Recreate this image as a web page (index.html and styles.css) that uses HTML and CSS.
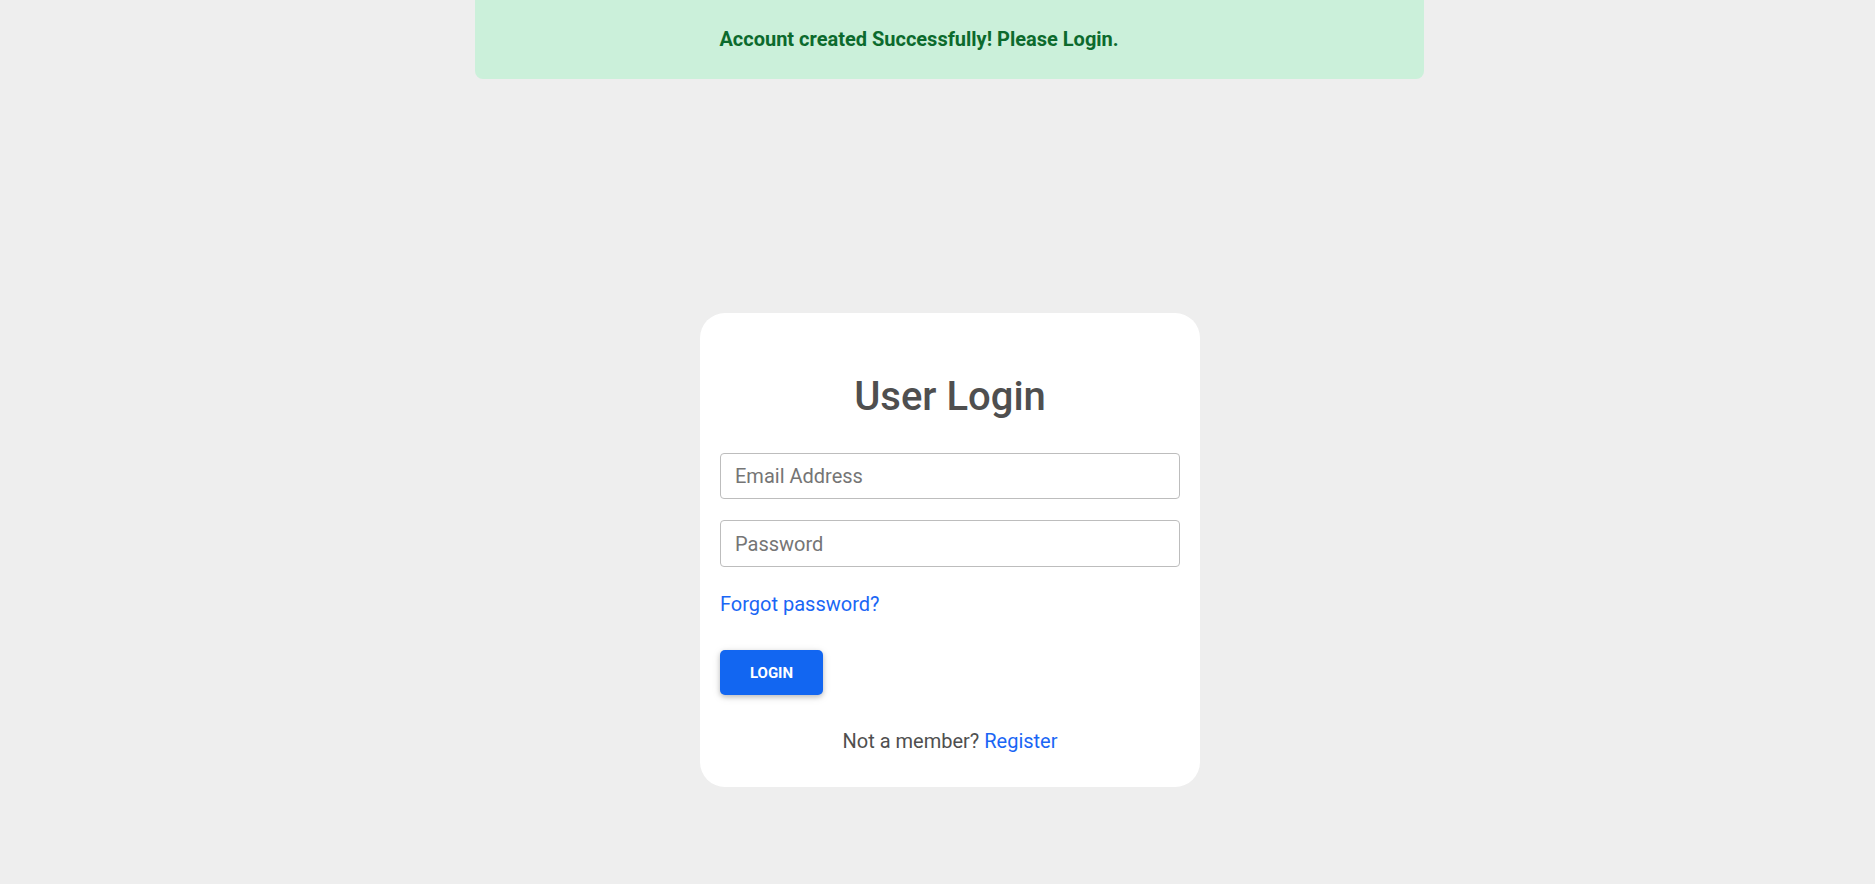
FILE: index.html
```html
<!DOCTYPE html>
<html lang="en">
<head>
<meta charset="utf-8">
<title>User Login</title>
<link rel="stylesheet" href="styles.css">
</head>
<body>
<div class="page">
  <div class="alert">Account created Successfully! Please Login.</div>
  <form class="card">
    <h1 class="title">User Login</h1>
    <input class="field" type="email" placeholder="Email Address">
    <input class="field field-gap" type="password" placeholder="Password">
    <a class="link forgot" href="#">Forgot password?</a>
    <button class="btn" type="button">Login</button>
    <p class="footer">Not a member? <a class="link" href="#">Register</a></p>
  </form>
</div>
</body>
</html>
```

FILE: styles.css
```css
html, body {
  margin: 0;
  padding: 0;
  background: #eeeeee;
  font-family: Roboto, "Liberation Sans", sans-serif;
  color: #4f4f4f;
}
.page {
  margin-left: 25px;
  display: flex;
  flex-direction: column;
  align-items: center;
  min-height: 884px;
}
.alert {
  box-sizing: border-box;
  width: 949px;
  height: 79px;
  margin-right: 1px;
  background: #cbf0da;
  color: #0c6a2d;
  font-size: 20px;
  font-weight: 700;
  display: flex;
  align-items: center;
  justify-content: center;
  padding-right: 61px;
  padding-bottom: 2px;
  border-radius: 0 0 8px 8px;
}
.card {
  box-sizing: border-box;
  margin-top: 234px;
  width: 500px;
  background: #ffffff;
  border-radius: 25px;
  padding: 60px 20px 31px;
  display: flex;
  flex-direction: column;
}
.title {
  margin: 0 0 32px;
  font-size: 40px;
  line-height: 48px;
  font-weight: 500;
  text-align: center;
  color: #4f4f4f;
}
.field {
  box-sizing: border-box;
  height: 46px;
  width: 100%;
  border: 1px solid #bdbdbd;
  border-radius: 4px;
  padding: 0 14px;
  font-family: inherit;
  font-size: 20px;
  color: #4f4f4f;
  outline: none;
  background: #fff;
}
.field::placeholder {
  color: #757575;
}
.field-gap {
  margin-top: 21px;
  height: 47px;
}
.link {
  color: #1a66f5;
  text-decoration: none;
}
.forgot {
  margin-top: 22px;
  font-size: 20px;
  line-height: 30px;
  align-self: flex-start;
}
.btn {
  margin-top: 31px;
  align-self: flex-start;
  height: 45px;
  width: 103px;
  padding: 0;
  border: 0;
  border-radius: 5px;
  background: #1266f1;
  color: #ffffff;
  font-family: inherit;
  font-size: 15px;
  font-weight: 700;
  text-transform: uppercase;
  box-shadow: 0 2px 5px 0 rgba(0,0,0,.2), 0 2px 10px 0 rgba(0,0,0,.1);
}
.footer {
  margin: 31px 0 0;
  font-size: 20px;
  line-height: 30px;
  text-align: center;
}
```
